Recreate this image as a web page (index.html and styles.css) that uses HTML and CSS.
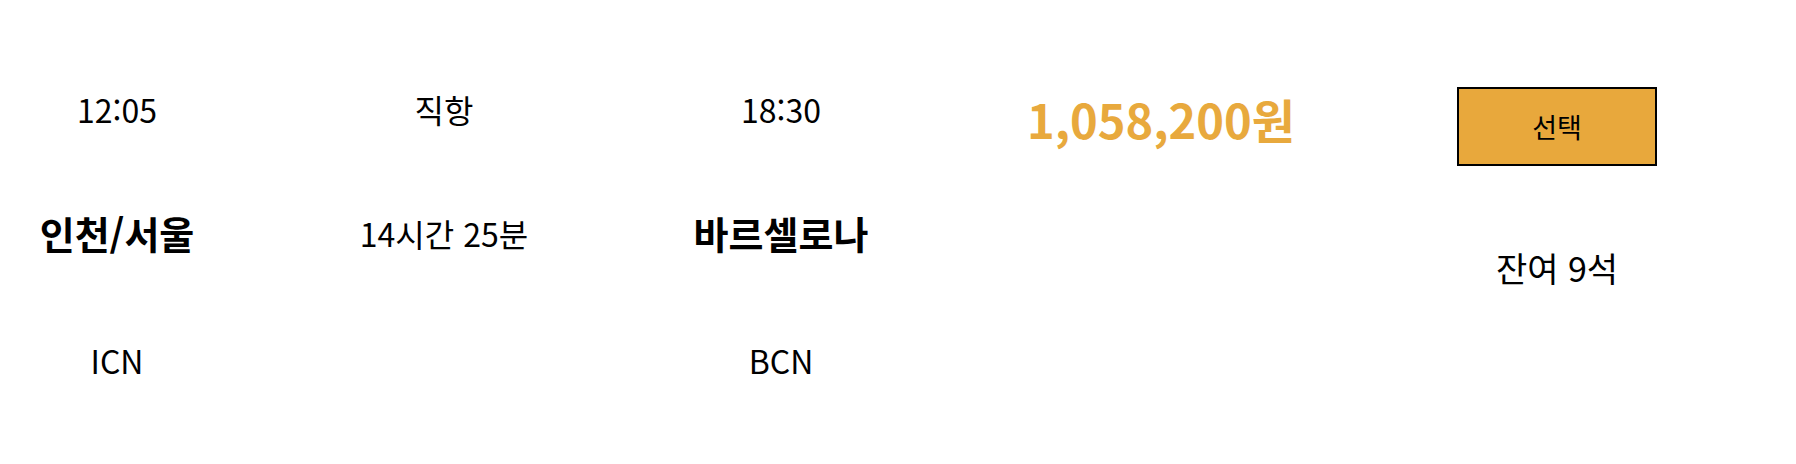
FILE: index.html
```html
<!DOCTYPE html>
<html lang="ko">
<head>
<meta charset="utf-8">
<link rel="stylesheet" href="styles.css">
</head>
<body>
<div class="flight">
  <div class="col col-dep">
    <div class="line">12:05</div>
    <div class="line name">인천/서울</div>
    <div class="line code">ICN</div>
  </div>
  <div class="col col-mid">
    <div class="line">직항</div>
    <div class="line">14시간 25분</div>
  </div>
  <div class="col col-arr">
    <div class="line">18:30</div>
    <div class="line name">바르셀로나</div>
    <div class="line code">BCN</div>
  </div>
  <div class="col col-price">
    <div class="price">1,058,200원</div>
  </div>
  <div class="col col-select">
    <button class="select-btn">선택</button>
    <div class="line seats">잔여 9석</div>
  </div>
</div>
</body>
</html>
```
FILE: styles.css
```css
html, body {
  margin: 0;
  background: #ffffff;
}
body {
  font-family: "Noto Sans CJK KR", sans-serif;
  color: #000000;
}
.flight {
  display: flex;
  align-items: flex-start;
  gap: 165px;
  padding-left: 40px;
}
.col {
  display: flex;
  flex-direction: column;
  align-items: center;
  text-align: center;
  flex: none;
}
.col-dep { width: 154px; padding-top: 89px; gap: 84px; }
.col-mid { width: 170px; padding-top: 89px; gap: 84px; }
.col-arr { width: 174px; padding-top: 89px; gap: 84px; }
.col-price { width: 256px; padding-top: 94px; }
.col-select { width: 206px; padding-top: 87px; gap: 82px; }
.line {
  font-size: 32px;
  line-height: 40px;
  white-space: nowrap;
}
.name {
  font-size: 38px;
  font-weight: 700;
}
.code {
  margin-top: 3px;
}
.price {
  font-size: 47px;
  line-height: 50px;
  font-weight: 700;
  color: #e8a93d;
  white-space: nowrap;
}
.select-btn {
  width: 200px;
  height: 79px;
  box-sizing: border-box;
  border: 2px solid #000000;
  background: #e8a83c;
  font-family: "Noto Sans CJK KR", sans-serif;
  font-size: 27px;
  color: #000000;
  padding: 0;
}
.seats {
  font-size: 34px;
}
```
